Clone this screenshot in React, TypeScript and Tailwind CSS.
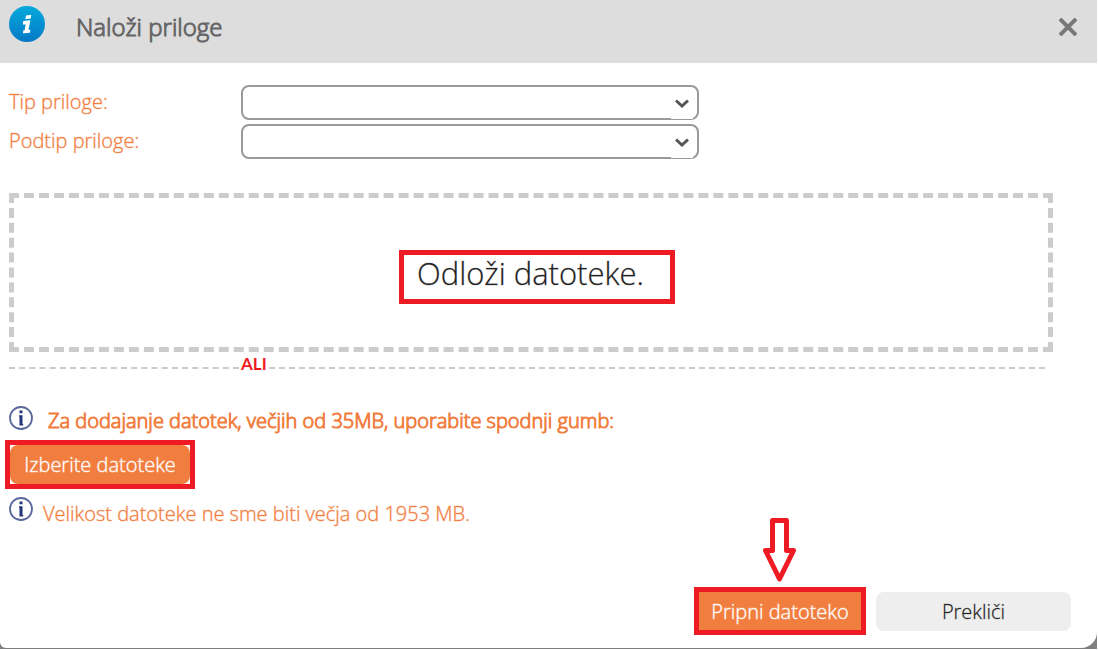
import type { ReactNode } from "react";

const fields = [
  { id: "tip", label: "Tip priloge:" },
  { id: "podtip", label: "Podtip priloge:" },
];

function InfoBadge() {
  return (
    <svg className="size-9 shrink-0" viewBox="0 0 36 36" aria-hidden="true">
      <defs>
        <linearGradient id="badge" x1="0" y1="0" x2="0" y2="1">
          <stop offset="0" stopColor="#04a9dc" />
          <stop offset="1" stopColor="#0379c6" />
        </linearGradient>
      </defs>
      <circle cx="18" cy="18" r="18" fill="url(#badge)" />
      <path d="M17 9.600 22.300 8.800l-.6 3.600-5.400.8zM14.200 15l7.200-.8-2 9.600h2l-.5 3-7 .5.5-3.100h1.200l1.100-5.800h-2.900z" fill="#fff" />
    </svg>
  );
}

function InfoCircle() {
  return (
    <svg className="size-6 shrink-0" viewBox="0 0 24 24" fill="none" aria-hidden="true">
      <circle cx="12" cy="12" r="11" stroke="#5a689c" strokeWidth="1.8" />
      <path d="M10.500 4.500h3v2.800h-3zM10 9.300h3.500v8.700h.7v1.500h-3.700v-8.700H10z" fill="#22347a" />
    </svg>
  );
}

function Highlight({ children }: { children: ReactNode }) {
  return <div className="w-fit border-5 border-[#ee1b24]">{children}</div>;
}

export default function App() {
  return (
    <div className="flex min-h-screen flex-col border-r border-b border-white bg-[#808080] pb-px font-['Open_Sans',sans-serif] text-xl font-light text-[#f17e3f] [-webkit-text-stroke:1px_#f17e3f59]">
      <div role="dialog" aria-labelledby="title" className="flex flex-1 flex-col overflow-hidden rounded-br-2xl rounded-bl-md bg-white">
        {/* Header */}
        <header className="flex h-[63px] items-start justify-between bg-[#ddd] pt-1.5 pr-5 pl-[9px]">
          <div className="flex gap-[31px]">
            <InfoBadge />
            <h1 id="title" className="pt-1 text-2xl leading-[34px] font-light text-[#666] [-webkit-text-stroke:1px_#666]">
              Naloži priloge
            </h1>
          </div>
          <button type="button" aria-label="Zapri" className="mt-3">
            <svg className="size-[18px]" viewBox="0 0 18 18" stroke="#777" strokeWidth="4" aria-hidden="true">
              <path d="M1 1l16 16M17 1L1 17" />
            </svg>
          </button>
        </header>

        {/* Attachment type */}
        <div className="flex flex-col gap-1 pt-[22px] pl-[9px]">
          {fields.map((f) => (
            <div key={f.id} className="flex">
              <label htmlFor={f.id} className="w-[232px] leading-[34px]">
                {f.label}
              </label>
              <div className="relative w-[458px]">
                <select id={f.id} className="block h-[35px] w-full appearance-none rounded-lg border-2 border-[#999] bg-white px-2 text-[#222]">
                  <option value=""></option>
                </select>
                <span className="pointer-events-none absolute right-1.5 bottom-px flex h-5 w-[22px] justify-center bg-white">
                  <svg className="h-2.5 w-3.5" viewBox="0 0 14 10" fill="none" stroke="#555" strokeWidth="3" aria-hidden="true">
                    <path d="M1 1.500l6 5.500 6-5.500" />
                  </svg>
                </span>
              </div>
            </div>
          ))}
        </div>

        {/* Drop zone */}
        <div className="mt-[34px] mr-11 ml-[9px] flex h-[159px] items-center justify-center border-5 border-dashed border-[#ccc]">
          <div className="mt-2 ml-3">
            <Highlight>
              <p className="h-11 w-[266px] pl-[13px] text-[31px] leading-9 text-[#222] [-webkit-text-stroke:1px_#22222240]">Odloži datoteke.</p>
            </Highlight>
          </div>
        </div>
        <div className="mr-[52px] ml-[9px] flex h-6 items-center">
          <div className="mt-2 w-[230px] border-t-2 border-dashed border-[#ccc]" />
          <span className="px-0.5 font-['Lato',sans-serif] text-[17px] leading-6 font-bold text-[#ee1b24] [-webkit-text-stroke:0]">ALI</span>
          <div className="mt-2 flex-1 border-t-2 border-dashed border-[#ccc]" />
        </div>

        {/* Large files */}
        <div className="mt-[30px] flex pl-[9px]">
          <InfoCircle />
          <p className="ml-[15px] leading-[30px] [-webkit-text-stroke:1px_#f17e3f]">
            Za dodajanje datotek, večjih od 35MB, uporabite spodnji gumb:
          </p>
        </div>
        <div className="mt-1 pl-[5px]">
          <Highlight>
            <button type="button" className="block h-[39px] w-[180px] rounded-lg bg-[#f17e3f] text-white [-webkit-text-stroke:1px_#ffffff66]">
              Izberite datoteke
            </button>
          </Highlight>
        </div>
        <div className="mt-2 flex pl-[9px]">
          <InfoCircle />
          <p className="ml-2.5 leading-[34px]">Velikost datoteke ne sme biti večja od 1953 MB.</p>
        </div>

        {/* Actions */}
        <footer className="mt-auto flex items-center justify-end gap-2.5 pr-[26px] pb-[13px]">
          <div className="relative">
            <svg className="absolute bottom-full left-[69px] mb-[5px] h-16 w-[33px]" viewBox="0 0 33 64" fill="none" stroke="#ee1b24" strokeWidth="5" strokeLinejoin="round" aria-hidden="true">
              <path d="M9.500 2.500h14v30H30.500L16.500 61 2.500 32.500h7z" />
            </svg>
            <Highlight>
              <button type="button" className="block h-[38px] w-[162px] bg-[#f17e3f] pt-0.5 text-white [-webkit-text-stroke:1px_#ffffff66]">
                Pripni datoteko
              </button>
            </Highlight>
          </div>
          <button type="button" className="h-[39px] w-[195px] rounded-lg bg-[#eee] pt-0.5 text-[#222] [-webkit-text-stroke:1px_#22222240]">
            Prekliči
          </button>
        </footer>
      </div>
    </div>
  );
}
